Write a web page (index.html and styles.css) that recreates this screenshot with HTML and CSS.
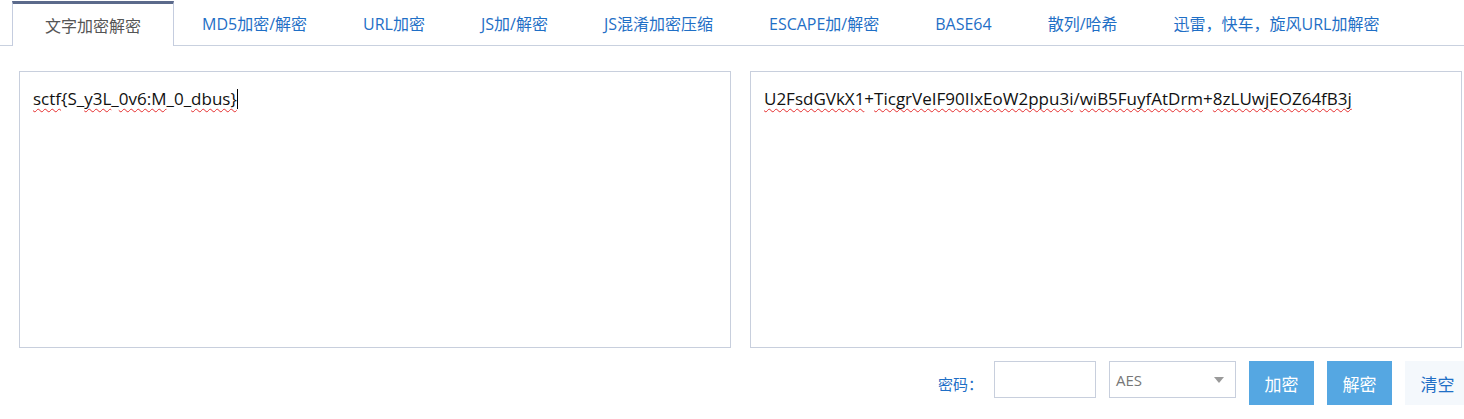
FILE: index.html
```html
<!DOCTYPE html>
<html lang="zh-CN">
<head>
<meta charset="utf-8">
<title>文字加密解密</title>
<link rel="stylesheet" href="styles.css">
</head>
<body>
<div class="tab-bar">
  <ul class="tab-title">
    <li class="tab active">文字加密解密</li>
    <li class="tab">MD5加密/解密</li>
    <li class="tab">URL加密</li>
    <li class="tab">JS加/解密</li>
    <li class="tab">JS混淆加密压缩</li>
    <li class="tab">ESCAPE加/解密</li>
    <li class="tab">BASE64</li>
    <li class="tab">散列/哈希</li>
    <li class="tab">迅雷，快车，旋风URL加解密</li>
  </ul>
</div>
<div class="panel">
  <div class="editors">
    <div class="editor"><span class="sp">sctf</span>{S_<span class="sp">y3L</span>_<span class="sp">0v6:M</span>_0_<span class="sp">dbus}</span><span class="caret"></span></div>
    <div class="editor"><span class="sp">U2FsdGVkX1</span>+<span class="sp">TicgrVeIF90IIxEoW2ppu3i</span>/<span class="sp">wiB5FuyfAtDrm</span>+<span class="sp">8zLUwjEOZ64fB3j</span></div>
  </div>
  <div class="actions">
    <label class="pwd-label">密码：</label>
    <div class="pwd-input"></div>
    <div class="select"><span class="select-value">AES</span><span class="arrow"></span></div>
    <button class="btn btn-primary">加密</button>
    <button class="btn btn-primary">解密</button>
    <button class="btn btn-light">清空</button>
  </div>
</div>
</body>
</html>
```
FILE: styles.css
```css
html, body {
  margin: 0;
  padding: 0;
  background: #fff;
  overflow: hidden;
}
body {
  width: 1464px;
  height: 419px;
  font-family: "Open Sans", "Noto Sans CJK SC", sans-serif;
}
.tab-bar {
  margin-top: 1px;
  padding-left: 12px;
  border-bottom: 1px solid #c9d1df;
  height: 44px;
}
.tab-title {
  list-style: none;
  margin: 0;
  padding: 0;
  display: flex;
  height: 44px;
}
.tab {
  box-sizing: border-box;
  height: 44px;
  line-height: 46px;
  padding: 0 28px;
  font-size: 16px;
  color: #1f6fc6;
  white-space: nowrap;
}
.tab.active {
  height: 45px;
  margin-bottom: -1px;
  padding: 0 32px;
  line-height: 44px;
  color: #555;
  background: #fff;
  border-top: 3px solid #5b6a8b;
  border-left: 1px solid #c5cddf;
  border-right: 1px solid #c5cddf;
}
.panel {
  padding: 25px 2px 0 19px;
}
.editors {
  display: flex;
  gap: 19px;
}
.editor {
  box-sizing: border-box;
  width: 712px;
  height: 277px;
  border: 1px solid #c8cfdd;
  padding: 15px 13px;
  font-size: 17px;
  line-height: 24px;
  color: #111;
  white-space: nowrap;
}
.sp {
  text-decoration: underline wavy #e62e2e;
  text-decoration-thickness: 1px;
  text-underline-offset: 3px;
  text-decoration-skip-ink: none;
}
.caret {
  display: inline-block;
  width: 0;
  height: 20px;
  border-left: 1px solid #000;
  vertical-align: -4px;
}
.actions {
  margin-top: 13px;
  margin-right: -8px;
  display: flex;
  justify-content: flex-end;
  align-items: flex-start;
  gap: 13px;
}
.pwd-label {
  align-self: center;
  margin-right: -2px;
  font-family: "Noto Sans CJK SC", sans-serif;
  font-size: 15px;
  color: #1f6fc6;
}
.pwd-input {
  box-sizing: border-box;
  width: 102px;
  height: 37px;
  border: 1px solid #c8cfdd;
}
.select {
  box-sizing: border-box;
  width: 127px;
  height: 37px;
  border: 1px solid #c8cfdd;
  display: flex;
  align-items: center;
  justify-content: space-between;
  padding: 0 11px 0 6px;
  font-size: 15px;
  color: #777;
}
.arrow {
  width: 0;
  height: 0;
  border-left: 5px solid transparent;
  border-right: 5px solid transparent;
  border-top: 6px solid #9a9a9a;
}
.btn {
  box-sizing: border-box;
  width: 65px;
  height: 44px;
  border: none;
  padding: 0;
  font-family: "Noto Sans CJK SC", sans-serif;
  font-size: 17px;
}
.btn-primary {
  background: #55a7e2;
  color: #fff;
}
.btn-light {
  background: #f4f8fc;
  color: #1f6fc6;
}
```
